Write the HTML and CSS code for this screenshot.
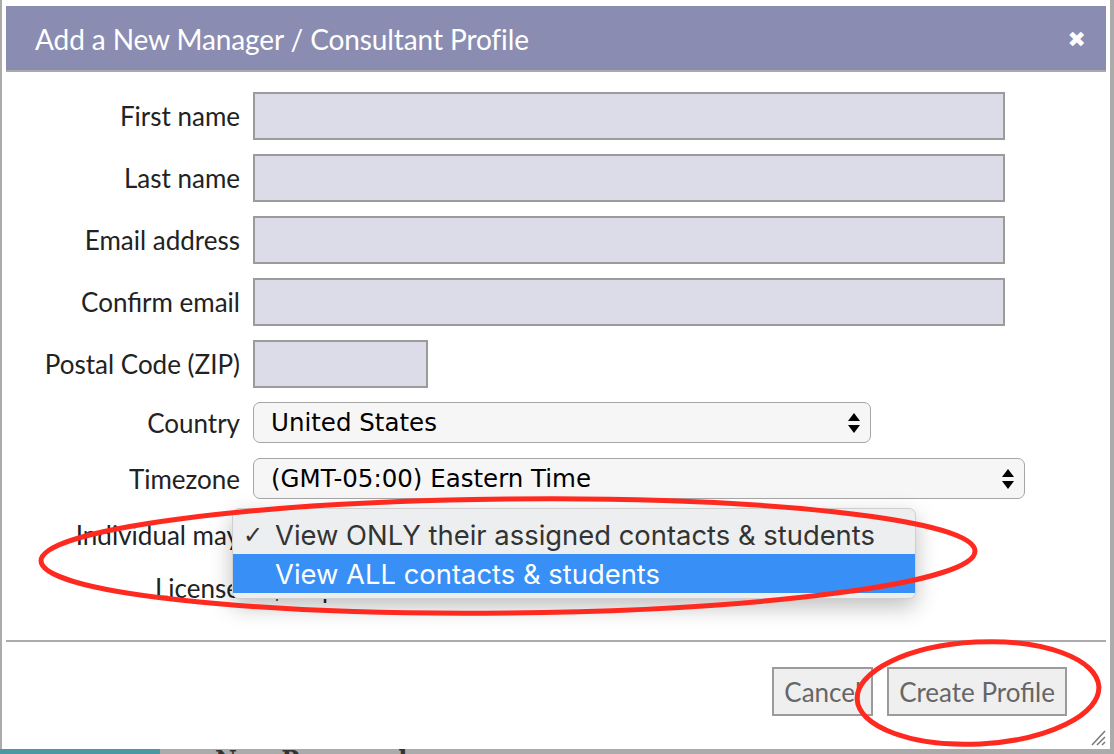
FILE: index.html
```html
<!DOCTYPE html>
<html>
<head>
<meta charset="utf-8">
<link rel="stylesheet" href="styles.css">
</head>
<body>
<div class="page">
  <div class="dialog">
    <div class="header">
      <span class="title">Add a New Manager / Consultant Profile</span>
      <span class="close">&#10006;</span>
    </div>
    <div class="form">
      <div class="row"><label class="lbl">First name</label><div class="input w-full"></div></div>
      <div class="row"><label class="lbl">Last name</label><div class="input w-full"></div></div>
      <div class="row"><label class="lbl">Email address</label><div class="input w-full"></div></div>
      <div class="row"><label class="lbl">Confirm email</label><div class="input w-full"></div></div>
      <div class="row"><label class="lbl">Postal Code (ZIP)</label><div class="input w-zip"></div></div>
      <div class="row row-sel"><label class="lbl">Country</label>
        <div class="select w-country"><span>United States</span>
          <svg class="arrows" viewBox="0 0 12 22" width="12" height="22"><path d="M6 1 L12 9 L0 9 Z M0 13 L12 13 L6 21 Z" fill="#000"/></svg>
        </div>
      </div>
      <div class="row row-sel"><label class="lbl">Timezone</label>
        <div class="select w-tz"><span>(GMT-05:00) Eastern Time</span>
          <svg class="arrows" viewBox="0 0 12 22" width="12" height="22"><path d="M6 1 L12 9 L0 9 Z M0 13 L12 13 L6 21 Z" fill="#000"/></svg>
        </div>
      </div>
      <div class="row row-txt row-ind"><label class="lbl">Individual may</label><div class="val"></div>
        <div class="popup">
          <div class="opt"><span class="check">&#10003;</span>View ONLY their assigned contacts &amp; students</div>
          <div class="opt sel"><span class="check"></span>View ALL contacts &amp; students</div>
        </div>
      </div>
      <div class="row row-txt"><label class="lbl">License</label><div class="val">$25 per month</div></div>
    </div>
    <div class="sep"></div>
    <div class="actions">
      <button class="btn">Cancel</button>
      <button class="btn">Create Profile</button>
    </div>
    <svg class="grip" width="16" height="18" viewBox="0 0 16 18"><path d="M2 17 L15 3 M7 17 L15 9 M12 17 L15 14" stroke="#777" stroke-width="1.5"/></svg>
  </div>
  <div class="under">
    <div class="teal"></div>
    <div class="under-text">New Password</div>
  </div>
  <svg class="marks" width="1114" height="754" viewBox="0 0 1114 754">
    <ellipse cx="508" cy="556" rx="467" ry="57" transform="rotate(-0.6 508 556)" fill="none" stroke="#ff2a1f" stroke-width="5"/>
    <ellipse cx="978" cy="693" rx="121" ry="51" transform="rotate(-3 978 693)" fill="none" stroke="#ff2a1f" stroke-width="5"/>
  </svg>
</div>
</body>
</html>
```

FILE: styles.css
```css
* { box-sizing: border-box; }
html, body { margin: 0; padding: 0; }
body { background: #ababab; font-family: Lato, "Open Sans", sans-serif; }
.page { position: relative; width: 1114px; height: 754px; overflow: hidden; display: flex; flex-direction: column; }
.dialog {
  position: relative;
  margin-left: 2px;
  width: 1108px;
  height: 749px;
  flex: none;
  background: #fff;
  padding: 6px 4px 0 4px;
  display: flex;
  flex-direction: column;
}
.header {
  height: 66px;
  background: #8a8db1;
  border-bottom: 2px solid #a9a9a9;
  display: flex;
  align-items: center;
  justify-content: space-between;
  padding: 2px 20px 0 29px;
  color: #fff;
}
.title { font-size: 28px; font-weight: 400; letter-spacing: -0.1px; }
.close { font-size: 22px; font-family: "DejaVu Sans", sans-serif; font-weight: bold; }
.form { padding-top: 20px; display: flex; flex-direction: column; }
.row { display: grid; grid-template-columns: 234px auto; column-gap: 13px; align-items: center; margin-bottom: 14px; position: relative; }
.lbl { text-align: right; font-size: 26px; color: #222; }
.input { height: 48px; background: #dcdce8; border: 2px solid #9b9b9b; }
.w-full { width: 752px; }
.w-zip { width: 175px; }
.row-sel { margin-bottom: 15px; }
.select {
  height: 41px;
  background: #f6f6f6;
  border: 1.5px solid #a6a6a6;
  border-radius: 7px;
  display: flex;
  align-items: center;
  justify-content: space-between;
  padding: 0 10px 0 17px;
  font-family: "DejaVu Sans", sans-serif;
  font-size: 24.5px;
  color: #000;
}
.w-country { width: 618px; }
.w-tz { width: 772px; }
.row-txt { height: 40px; margin-bottom: 13px; }
.row-ind { margin-top: 1px; }
.val { font-size: 26px; color: #222; padding-left: 17px; }
.popup {
  position: absolute;
  left: 226px;
  top: -7px;
  width: 684px;
  height: 91px;
  background: #eceeef;
  border: 1px solid #cfcfcf;
  border-radius: 7px;
  box-shadow: 0 8px 22px rgba(0,0,0,0.25);
  padding-top: 6px;
  font-family: Inter, "Liberation Sans", sans-serif;
  font-size: 27.4px;
  color: #333;
  z-index: 2;
}
.opt { height: 39px; display: flex; align-items: center; }
.opt.sel { height: 39px; background: #3890f7; color: #fff; }
.check { width: 42px; padding-left: 10px; font-family: "DejaVu Sans", sans-serif; font-size: 24px; font-weight: bold; color: #333; }
.sep { margin-top: 19px; height: 2px; background: #acacac; flex: none; }
.actions { display: flex; justify-content: flex-end; gap: 14px; padding: 25px 39px 0 0; }
.btn {
  height: 49px;
  background: #efefef;
  border: 2px solid #9b9b9b;
  font-family: Lato, sans-serif;
  font-size: 26px;
  color: #666;
  padding: 0 10px;
  margin: 0;
}
.grip { position: absolute; right: 4px; bottom: 3px; }
.under { height: 5px; display: flex; align-items: flex-start; overflow: hidden; flex: none; }
.teal { width: 160px; height: 5px; background: #4a98a4; flex: none; }
.under-text { margin-left: 55px; margin-top: -1px; font-family: "DejaVu Serif", serif; font-size: 24px; font-weight: bold; color: #333; line-height: 24px; white-space: nowrap; }
.marks { position: absolute; left: 0; top: 0; pointer-events: none; z-index: 5; }
```
